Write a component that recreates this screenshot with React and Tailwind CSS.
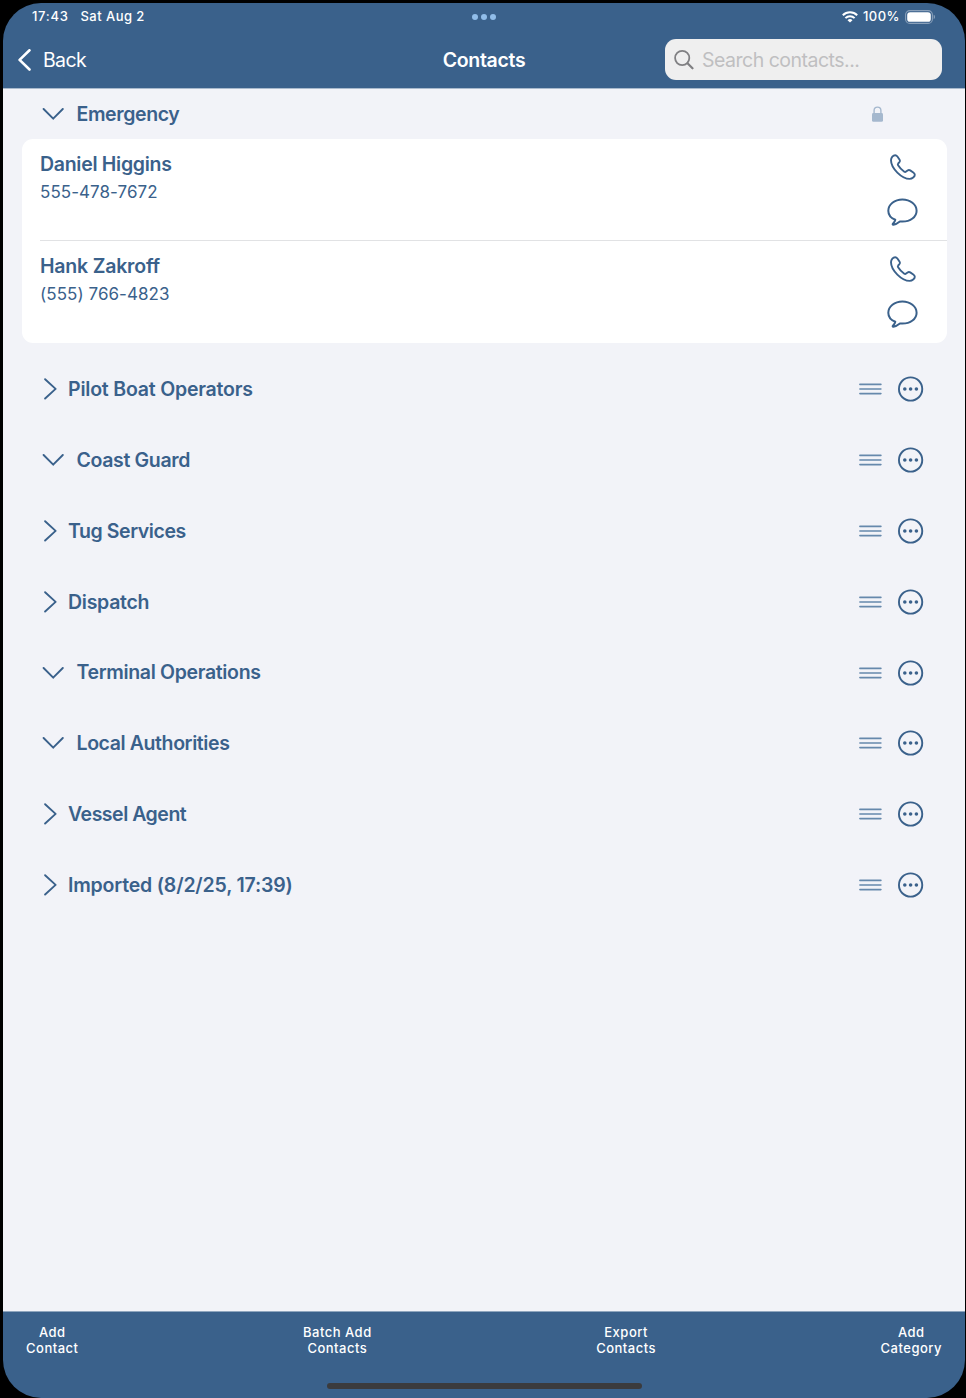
import React from "react";

const contacts = [
  { name: "Daniel Higgins", phone: "555-478-7672", tracking: "tracking-[-0.29px]" },
  { name: "Hank Zakroff", phone: "(555) 766-4823", tracking: "tracking-[-0.2px]" },
];

const categories = [
  { name: "Pilot Boat Operators", open: false, tracking: "tracking-[-0.2px]" },
  { name: "Coast Guard", open: true, tracking: "tracking-[-0.35px]" },
  { name: "Tug Services", open: false, tracking: "tracking-[-0.42px]" },
  { name: "Dispatch", open: false, tracking: "tracking-[-0.28px]" },
  { name: "Terminal Operations", open: true, tracking: "tracking-[-0.34px]" },
  { name: "Local Authorities", open: true, tracking: "tracking-[-0.4px]" },
  { name: "Vessel Agent", open: false, tracking: "tracking-[-0.48px]" },
  { name: "Imported (8/2/25, 17:39)", open: false, tracking: "tracking-[-0.18px]" },
];

const stroke = {
  fill: "none",
  stroke: "currentColor",
  strokeLinecap: "round",
  strokeLinejoin: "round",
};

function ChevronDown() {
  return (
    <svg className="mr-[12.5px] h-3 w-[22px] shrink-0" viewBox="0 0 22 12" {...stroke} strokeWidth="1.9">
      <path d="M1.6 1 11.2 10.7 20.8 1" />
    </svg>
  );
}

function ChevronRight() {
  return (
    <svg className="mr-[11px] ml-[2px] h-[22px] w-[13px] shrink-0" viewBox="0 0 13 22" {...stroke} strokeWidth="1.9">
      <path d="M1.1 1.2 11.6 10.9 1.1 20.5" />
    </svg>
  );
}

function Phone() {
  return (
    <svg className="h-[26px] w-[26px]" viewBox="0 0 26 26" {...stroke} strokeWidth="1.9">
      <path d="M1 6.300C1 3.500 3.200 1.200 5.200 1.200c.9 0 1.600.5 2.200 1.300l2.200 3.200c.6.900.5 1.700-.2 2.500L8.200 9.500c-.5.6-.5 1.200-.1 1.800 1.500 2.500 3.800 4.800 6.200 6.400.6.4 1.200.4 1.800-.1l1.500-1.100c.8-.6 1.700-.7 2.600-.1l3.100 2.100c.9.6 1.500 1.200 1.500 2.200 0 2.100-2.600 4.200-5.100 4.200C11.700 24.900 1 14.300 1 6.300Z" />
    </svg>
  );
}

function Message() {
  return (
    <svg className="h-7 w-[31px]" viewBox="0.300 0 31 28" {...stroke} strokeWidth="2">
      <path d="M8.600 21.700C4.200 20 1.600 16.800 1.600 12.700 1.600 6.400 7.900 1.400 15.700 1.400s14.200 5 14.200 11.300-6.200 10.900-14.200 10.900c-.9 0-1.800 0-2.500-.1-2 1.600-4.200 2.900-6.500 3.200-.8.1-1-.5-.5-1 1.200-1.100 2.100-2.500 2.400-4Z" />
    </svg>
  );
}

function DragHandle() {
  return (
    <svg className="h-3 w-[23px] text-[#6689ac]" viewBox="0.300 0 23 12" {...stroke} strokeWidth="1.6">
      <path d="M1.200 1.400h21M1.200 6h21M1.200 10.600h21" />
    </svg>
  );
}

function More() {
  return (
    <svg className="h-[26px] w-[26px]" viewBox="0.400 0 26 26">
      <circle cx="13" cy="13" r="11.650" fill="none" stroke="currentColor" strokeWidth="1.900" />
      <g fill="currentColor">
        <circle cx="7.200" cy="13" r="1.800" />
        <circle cx="13" cy="13" r="1.800" />
        <circle cx="18.800" cy="13" r="1.800" />
      </g>
    </svg>
  );
}

function StatusBar() {
  return (
    <div className="grid h-7 grid-cols-[1fr_auto_1fr] items-center text-[13px] font-medium">
      <div className="flex gap-3 pl-[29px]">
        <span className="tracking-[0.700px]">17:43</span>
        <span className="tracking-[0.450px]">Sat Aug 2</span>
      </div>
      <div className="flex gap-[3px]">
        <i className="size-[6px] rounded-full bg-[#91bde9]" />
        <i className="size-[6px] rounded-full bg-[#91bde9]" />
        <i className="size-[6px] rounded-full bg-[#91bde9]" />
      </div>
      <div className="flex items-center justify-end pr-[29px]">
        <svg className="mr-[5px] h-3 w-4" viewBox="0 0 16 12" fill="none" stroke="white" strokeWidth="2">
          <path d="M.8 4.300a10.200 10.200 0 0 1 14.400 0M3.400 7.100a6.500 6.500 0 0 1 9.200 0" />
          <path d="M8 11.600 5.500 9.200a3.600 3.600 0 0 1 5 0Z" fill="white" stroke="none" />
        </svg>
        <span className="mr-[5px] tracking-[0.500px]">100%</span>
        <svg className="h-[14px] w-[31px]" viewBox="0 0 31 14">
          <rect x=".6" y=".6" width="26.800" height="12.800" rx="4.200" fill="none" stroke="#89a0ba" strokeWidth="1.100" />
          <rect x="2.200" y="2.200" width="23.600" height="9.600" rx="2.900" fill="white" />
          <path d="M28.700 4.800c1.700.6 1.700 3.800 0 4.400Z" fill="#89a0ba" />
        </svg>
      </div>
    </div>
  );
}

function NavBar() {
  return (
    <div className="grid h-[57px] grid-cols-[1fr_auto_1fr] items-center text-[19.500px]">
      <button className="flex items-center pl-[15px] text-left">
        <svg className="mr-3 h-[22px] w-[13px]" viewBox="0 0 13 22" {...stroke} strokeWidth="2.600">
          <path d="M11.500 1.300 1.600 10.900l9.900 9.600" />
        </svg>
        <span className="pt-0.5 tracking-[-0.650px]">Back</span>
      </button>
      <h1 className="pt-0.5 font-semibold tracking-[-0.300px]">Contacts</h1>
      <div className="mr-[23px] flex h-[41px] w-[277px] items-center justify-self-end rounded-[11px] bg-[#efefef] pl-[9px]">
        <svg className="mr-2 size-5 text-[#808083]" viewBox="0 0 20 20" {...stroke} strokeWidth="1.800">
          <circle cx="8.200" cy="8" r="7.100" />
          <path d="m13.500 13.300 5 5" strokeWidth="2.200" />
        </svg>
        <span className="pt-0.5 tracking-[-0.500px] text-[#bfbfc1]">Search contacts...</span>
      </div>
    </div>
  );
}

function ContactRow({ name, phone, tracking, last }) {
  return (
    <div className={last ? "flex h-[102px] justify-between" : "flex h-[102px] justify-between border-b border-[#e1e2e4]"}>
      <div className="pt-3">
        <div className={`text-[19.500px] leading-[26px] font-semibold ${tracking}`}>{name}</div>
        <div className="mt-[3px] text-[17px] leading-6 tracking-[0.050px]">{phone}</div>
      </div>
      <div className="mr-[28.500px] flex w-[31px] flex-col items-center pt-[15px]">
        <Phone />
        <div className="mt-[18px]"><Message /></div>
      </div>
    </div>
  );
}

function CategoryRow({ name, open, tracking }) {
  return (
    <div className="flex h-[70.860px] items-center pr-[41.500px] pl-[39px]">
      {open ? <ChevronDown /> : <ChevronRight />}
      <span className={`flex-1 pt-px text-[19.500px] font-semibold ${tracking}`}>{name}</span>
      <DragHandle />
      <div className="ml-4"><More /></div>
    </div>
  );
}

function FooterButton({ lines }) {
  return (
    <button className="flex flex-col text-center text-[13px] leading-4 font-medium tracking-[0.500px]">
      {lines.map((line) => <span key={line}>{line}</span>)}
    </button>
  );
}

export default function App() {
  return (
    <div className="h-[1398px] w-[966px] overflow-hidden bg-black pt-[3px] pr-px pl-[3px] font-['Inter',sans-serif] text-[#3a618b]">
      <div className="flex h-[1395px] flex-col overflow-hidden rounded-[38px] bg-[#3a618b]">
        <header className="h-[86px] shrink-0 border-b border-[#a9bacd] text-white">
          <StatusBar />
          <NavBar />
        </header>
        <main className="flex-1 bg-[#f2f3f8]">
          <div className="flex h-[50px] items-center pr-[82px] pl-[39px]">
            <ChevronDown />
            <span className="flex-1 pt-px text-[19.500px] font-semibold tracking-[-0.380px]">Emergency</span>
            <svg className="h-4 w-[11px] text-[#a5b8ce]" viewBox="0 0 11 16">
              <path d="M2.100 8V4.500a3.400 3.400 0 0 1 6.800 0V8" fill="none" stroke="currentColor" strokeWidth="1.400" />
              <rect y="7" width="11" height="8.800" rx="1.400" fill="currentColor" />
            </svg>
          </div>
          <section className="mr-[18.500px] ml-[18.500px] h-[204px] rounded-[11px] bg-white pl-[18.500px]">
            {contacts.map((c, i) => <ContactRow key={c.name} {...c} last={i === contacts.length - 1} />)}
          </section>
          <div className="pt-[10.700px]">
            {categories.map((c) => <CategoryRow key={c.name} {...c} />)}
          </div>
        </main>
        <footer className="flex h-[87px] shrink-0 flex-col items-center justify-between border-t border-[#8fa6be] text-white">
          <div className="flex w-full justify-between pt-[12px] pr-[23px] pl-[23px]">
            <FooterButton lines={["Add", "Contact"]} />
            <FooterButton lines={["Batch Add", "Contacts"]} />
            <FooterButton lines={["Export", "Contacts"]} />
            <FooterButton lines={["Add", "Category"]} />
          </div>
          <div className="mb-[9px] h-[6px] w-[315px] rounded-full bg-[#3b3b3d]" />
        </footer>
      </div>
    </div>
  );
}
